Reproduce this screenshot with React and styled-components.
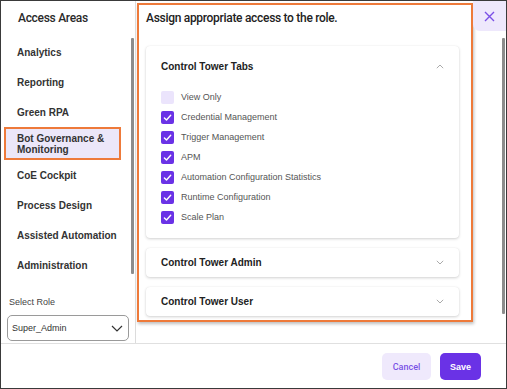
import React from 'react';
import styled, { createGlobalStyle } from 'styled-components';

const Global = createGlobalStyle`
  html, body { margin: 0; padding: 0; background: #fff; }
  body { font-family: "Liberation Sans", Arial, sans-serif; }
  * { box-sizing: border-box; }
`;

const ORANGE = '#ee7a3a';
const PURPLE = '#6a32e6';

const Frame = styled.div`
  width: 507px;
  height: 389px;
  border: 1px solid #3a3a3a;
  display: flex;
  flex-direction: column;
  background: #fff;
  overflow: hidden;
`;

const Body = styled.div`
  display: flex;
  height: 343px;
  border-bottom: 1px solid #e0e0e0;
`;

const Sidebar = styled.aside`
  position: relative;
  width: 135px;
  flex: none;
  border-right: 1px solid #dcdcdc;
  display: flex;
  flex-direction: column;
`;

const SideTitle = styled.h2`
  margin: 0 0 12px;
  padding: 10px 0 0 17px;
  font-family: Roboto, "Liberation Sans", sans-serif;
  font-size: 12px;
  line-height: 14px;
  font-weight: 500;
  letter-spacing: -0.3px;
  color: #2a2a2a;
`;

const NavList = styled.ul`
  list-style: none;
  margin: 0;
  padding: 0 0 0 3px;
`;

const NavItem = styled.li`
  width: 117px;
  min-height: ${p => (p.$active ? 33 : 30)}px;
  display: flex;
  align-items: center;
  padding: 0 2px 0 11px;
  border: 2px solid ${p => (p.$active ? ORANGE : 'transparent')};
  background: ${p => (p.$active ? '#ece7f9' : 'transparent')};
  font-size: 10px;
  line-height: 11px;
  font-weight: 700;
  color: #333;
  white-space: ${p => (p.$active ? 'normal' : 'nowrap')};
`;

const Thumb = styled.div`
  position: absolute;
  right: ${p => p.$right}px;
  top: ${p => p.$top}px;
  width: 3px;
  height: ${p => p.$h}px;
  background: #8c8c8c;
  border-radius: 1px;
`;

const RoleBlock = styled.div`
  margin-top: auto;
  padding: 0 0 2px 6px;
`;

const RoleLabel = styled.div`
  font-size: 9px;
  line-height: 11px;
  color: #444;
  padding-left: 2px;
  margin-bottom: 7px;
`;

const Select = styled.div`
  width: 122px;
  height: 26px;
  border: 1px solid #9a9a9a;
  border-radius: 5px;
  display: flex;
  align-items: center;
  justify-content: space-between;
  padding: 0 5px 0 4px;
  font-size: 9px;
  color: #333;
`;

const Main = styled.main`
  flex: 1;
  display: flex;
`;

const Panel = styled.section`
  margin: 2px 0 0 1px;
  width: 336px;
  height: 319px;
  border: 2px solid ${ORANGE};
  box-shadow: 1px 2px 3px rgba(0, 0, 0, 0.25);
  padding: 6px 12px 0 7px;
`;

const Heading = styled.h1`
  margin: 0 0 21px;
  font-family: Roboto, "Liberation Sans", sans-serif;
  font-size: 12px;
  line-height: 14px;
  font-weight: 500;
  letter-spacing: -0.3px;
  color: #222;
`;

const Cards = styled.div`
  display: flex;
  flex-direction: column;
  gap: 10px;
`;

const Card = styled.div`
  background: #fff;
  border-radius: 4px;
  box-shadow: 0 1px 3px rgba(0, 0, 0, 0.18), 0 0 1px rgba(0, 0, 0, 0.08);
  padding-bottom: ${p => (p.$open ? 11 : 0)}px;
`;

const CardHeader = styled.div`
  display: flex;
  align-items: center;
  justify-content: space-between;
  height: ${p => (p.$open ? 41 : 29)}px;
  padding: 0 15px;
  font-size: 10px;
  font-weight: 700;
  color: #222;
`;

const Row = styled.label`
  display: flex;
  align-items: center;
  gap: 7px;
  height: 20px;
  padding-left: 15px;
  font-size: 9px;
  color: #555;
`;

const Box = styled.span`
  width: 13px;
  height: 13px;
  border-radius: 2px;
  background: ${p => (p.$checked ? PURPLE : '#ebe4fc')};
  display: flex;
  align-items: center;
  justify-content: center;
`;

const Gutter = styled.div`
  position: relative;
  flex: 1;
`;

const CloseButton = styled.button`
  display: flex;
  align-items: center;
  justify-content: center;
  width: 100%;
  height: 30px;
  border: none;
  padding: 0;
  background: #eee8fc;
  border-bottom-left-radius: 7px;
`;

const Footer = styled.footer`
  flex: 1;
  display: flex;
  justify-content: flex-end;
  align-items: flex-start;
  gap: 9px;
  padding: 9px 25px 0 0;
`;

const Button = styled.button`
  height: 27px;
  width: ${p => p.$w}px;
  border: none;
  border-radius: 5px;
  font-family: ${p => (p.$primary ? '"Liberation Sans", Arial, sans-serif' : 'Roboto, "Liberation Sans", sans-serif')};
  font-size: 9px;
  font-weight: ${p => (p.$primary ? 700 : 500)};
  color: ${p => (p.$primary ? '#fff' : '#7a52e6')};
  background: ${p => (p.$primary ? PURPLE : '#efe9fc')};
  padding: 0;
`;

const Check = () => (
  <svg width="13" height="13" viewBox="0 0 13 13">
    <path d="M3.4 6.9 L5.5 9 L9.7 4.3" fill="none" stroke="#fff" strokeWidth="1.4" strokeLinecap="round" strokeLinejoin="round" />
  </svg>
);

const Chevron = ({ up }) => (
  <svg width="8" height="5" viewBox="0 0 8 5">
    <path d={up ? 'M0.8 4.2 L4 1 L7.2 4.2' : 'M0.8 0.8 L4 4 L7.2 0.8'} fill="none" stroke="#a0a0a0" strokeWidth="0.9" />
  </svg>
);

const nav = ['Analytics', 'Reporting', 'Green RPA', 'Bot Governance & Monitoring', 'CoE Cockpit', 'Process Design', 'Assisted Automation', 'Administration'];
const perms = [
  ['View Only', false],
  ['Credential Management', true],
  ['Trigger Management', true],
  ['APM', true],
  ['Automation Configuration Statistics', true],
  ['Runtime Configuration', true],
  ['Scale Plan', true],
];

export default function App() {
  return (
    <>
      <Global />
      <Frame>
        <Body>
          <Sidebar>
            <SideTitle>Access Areas</SideTitle>
            <NavList>
              {nav.map(n => (
                <NavItem key={n} $active={n.startsWith('Bot')}>{n}</NavItem>
              ))}
            </NavList>
            <Thumb $right={1} $top={37} $h={236} />
            <RoleBlock>
              <RoleLabel>Select Role</RoleLabel>
              <Select>
                <span>Super_Admin</span>
                <svg width="12" height="7" viewBox="0 0 12 7">
                  <path d="M1 1 L6 6 L11 1" fill="none" stroke="#333" strokeWidth="1.2" />
                </svg>
              </Select>
            </RoleBlock>
          </Sidebar>
          <Main>
            <Panel>
              <Heading>Assign appropriate access to the role.</Heading>
              <Cards>
                <Card $open>
                  <CardHeader $open>
                    <span>Control Tower Tabs</span>
                    <Chevron up />
                  </CardHeader>
                  {perms.map(([label, on]) => (
                    <Row key={label}>
                      <Box $checked={on}>{on && <Check />}</Box>
                      {label}
                    </Row>
                  ))}
                </Card>
                <Card>
                  <CardHeader>
                    <span>Control Tower Admin</span>
                    <Chevron />
                  </CardHeader>
                </Card>
                <Card>
                  <CardHeader>
                    <span>Control Tower User</span>
                    <Chevron />
                  </CardHeader>
                </Card>
              </Cards>
            </Panel>
            <Gutter>
              <CloseButton aria-label="Close">
                <svg width="11" height="11" viewBox="0 0 11 11">
                  <path d="M1 1 L10 10 M10 1 L1 10" stroke="#7a4fe6" strokeWidth="1.4" />
                </svg>
              </CloseButton>
              <Thumb $right={1} $top={37} $h={276} />
            </Gutter>
          </Main>
        </Body>
        <Footer>
          <Button $w={49}>Cancel</Button>
          <Button $w={41} $primary>Save</Button>
        </Footer>
      </Frame>
    </>
  );
}
